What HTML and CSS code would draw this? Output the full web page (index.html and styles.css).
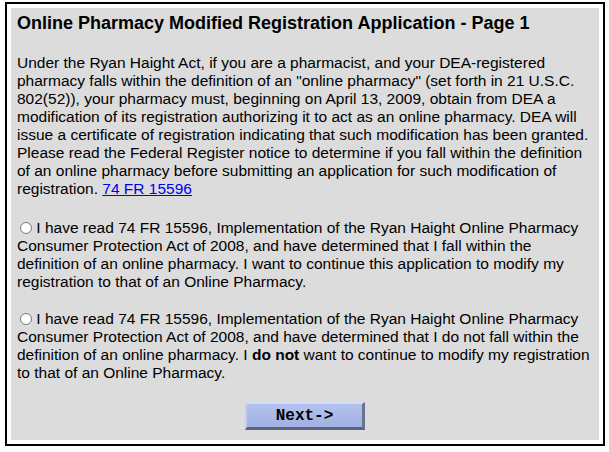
FILE: index.html
```html
<!DOCTYPE html>
<html>
<head>
<meta charset="utf-8">
<link rel="stylesheet" href="styles.css">
</head>
<body>
<div class="frame">
  <div class="panel">
    <h1 class="title">Online Pharmacy Modified Registration Application - Page 1</h1>
    <p class="para intro">Under the Ryan Haight Act, if you are a pharmacist, and your DEA-registered pharmacy falls within the definition of an "online pharmacy" (set forth in 21 U.S.C. 802(52)), your pharmacy must, beginning on April 13, 2009, obtain from DEA a modification of its registration authorizing it to act as an online pharmacy. DEA will issue a certificate of registration indicating that such modification has been granted. Please read the Federal Register notice to determine if you fall within the definition of an online pharmacy before submitting an application for such modification of registration. <a class="link" href="#">74 FR 15596</a></p>
    <p class="para opt1"><input class="radio" type="radio" name="opt"> I have read 74 FR 15596, Implementation of the Ryan Haight Online Pharmacy Consumer Protection Act of 2008, and have determined that I fall within the definition of an online pharmacy. I want to continue this application to modify my registration to that of an Online Pharmacy.</p>
    <p class="para opt2"><input class="radio" type="radio" name="opt"> I have read 74 FR 15596, Implementation of the Ryan Haight Online Pharmacy Consumer Protection Act of 2008, and have determined that I do not fall within the definition of an online pharmacy. I <b>do not</b> want to continue to modify my registration to that of an Online Pharmacy.</p>
    <div class="actions">
      <button class="next" type="button">Next-&gt;</button>
    </div>
  </div>
</div>
</body>
</html>
```
FILE: styles.css
```css
html, body {
  margin: 0;
  padding: 0;
  background: #ffffff;
}
body {
  font-family: "Liberation Sans", Arial, sans-serif;
  color: #000;
}
.frame {
  width: 588px;
  margin: 2px 0 0 5px;
  border: 2px solid #000;
  padding: 4px;
}
.panel {
  background: #dcdcdc;
  padding: 5px 6px 9px 6px;
  height: 418px;
}
.title {
  margin: 0;
  font-size: 18px;
  line-height: 21px;
  font-weight: bold;
}
.para {
  margin: 0;
  font-size: 15.5px;
  line-height: 18px;
}
.intro {
  margin-top: 20px;
}
.opt1 {
  margin-top: 21px;
}
.opt2 {
  margin-top: 19px;
}
.link {
  color: #0000ee;
  text-decoration: underline;
}
.radio {
  -webkit-appearance: none;
  appearance: none;
  width: 12px;
  height: 12px;
  margin: 0 0 0 3px;
  border: 1px solid #7a7a7a;
  border-radius: 50%;
  background: #fff;
  vertical-align: -1px;
}
.actions {
  display: flex;
  justify-content: center;
  margin-top: 20px;
}
.next {
  width: 120px;
  height: 28px;
  font-family: "Liberation Mono", "Courier New", monospace;
  font-weight: bold;
  font-size: 16px;
  color: #000;
  background: linear-gradient(#b4c2ee, #9fb0e2);
  border-style: solid;
  border-width: 2px 3px 3px 2px;
  border-color: #d4dcf6 #6a7290 #5a6280 #c4cef2;
  padding: 0;
  cursor: pointer;
}
```
